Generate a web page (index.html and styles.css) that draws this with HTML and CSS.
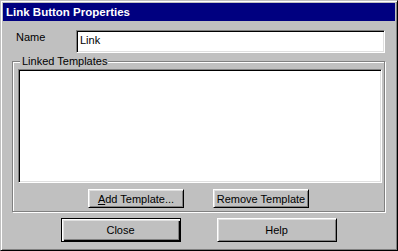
FILE: index.html
```html
<!DOCTYPE html>
<html>
<head>
<meta charset="utf-8">
<link rel="stylesheet" href="styles.css">
</head>
<body>
<div class="window">
  <div class="titlebar">Link Button Properties</div>
  <div class="content">
    <div class="name-row">
      <label class="name-label">Name</label>
      <div class="textbox">Link</div>
    </div>
    <div class="group">
      <span class="legend">Linked Templates</span>
      <div class="listbox"></div>
      <div class="group-buttons">
        <div class="btn small"><span class="ul">A</span>dd Template...</div>
        <div class="btn small">Remove Template</div>
      </div>
    </div>
    <div class="dialog-buttons">
      <div class="btn big default">Close</div>
      <div class="btn big">Help</div>
    </div>
  </div>
</div>
</body>
</html>
```
FILE: styles.css
```css
html, body {
  margin: 0;
  padding: 0;
  background: #c0c0c0;
}
body {
  font-family: "Liberation Sans", Arial, sans-serif;
  font-size: 11px;
  color: #000;
}
.window {
  width: 398px;
  height: 251px;
  box-sizing: border-box;
  background: #c0c0c0;
  border: 1px solid;
  border-color: #c0c0c0 #000 #000 #c0c0c0;
  box-shadow: inset 1px 1px #fff, inset -1px -1px #808080;
  padding: 2px;
  display: flex;
  flex-direction: column;
}
.titlebar {
  height: 18px;
  background: #000080;
  color: #fff;
  font-weight: bold;
  font-size: 11.5px;
  line-height: 18px;
  padding-left: 3px;
  flex: none;
}
.content {
  padding: 9px 10px 0 9px;
  display: flex;
  flex-direction: column;
}
.name-row {
  display: flex;
  align-items: flex-start;
  height: 23px;
}
.name-label {
  width: 64px;
  box-sizing: border-box;
  padding-left: 4px;
  padding-top: 1px;
  line-height: 13px;
}
.textbox {
  flex: 1;
  height: 23px;
  box-sizing: border-box;
  background: #fff;
  border: 1px solid;
  border-color: #808080 #fff #fff #808080;
  box-shadow: inset 1px 1px #000, inset -1px -1px #dfdfdf;
  padding: 3px 3px 0 3px;
  line-height: 13px;
}
.group {
  position: relative;
  margin-top: 8px;
  border: 1px solid #808080;
  box-shadow: inset 1px 1px #fff, 1px 1px #fff;
  padding: 7px 2px 3px 5px;
  display: flex;
  flex-direction: column;
}
.legend {
  position: absolute;
  left: 7px;
  top: -7px;
  background: #c0c0c0;
  padding: 0 1px 0 2px;
  line-height: 13px;
}
.listbox {
  height: 114px;
  box-sizing: border-box;
  background: #fff;
  border: 1px solid;
  border-color: #808080 #fff #fff #808080;
  box-shadow: inset 1px 1px #000, inset -1px -1px #dfdfdf;
}
.group-buttons {
  margin-top: 6px;
  display: flex;
  justify-content: center;
  gap: 29px;
  padding-right: 3px;
}
.btn {
  box-sizing: border-box;
  background: #c0c0c0;
  border: 1px solid;
  border-color: #fff #000 #000 #fff;
  box-shadow: inset 1px 1px #dfdfdf, inset -1px -1px #808080;
  text-align: center;
  display: flex;
  align-items: center;
  justify-content: center;
}
.btn.small {
  width: 96px;
  height: 19px;
}
.btn.big {
  width: 120px;
  height: 24px;
}
.btn.default {
  border-color: #000;
  box-shadow: inset 1px 1px #fff, inset 2px 2px #dfdfdf, inset -1px -1px #000, inset -2px -2px #808080;
}
.ul {
  text-decoration: underline;
}
.dialog-buttons {
  margin-top: 6px;
  display: flex;
  justify-content: center;
  gap: 36px;
}
```
